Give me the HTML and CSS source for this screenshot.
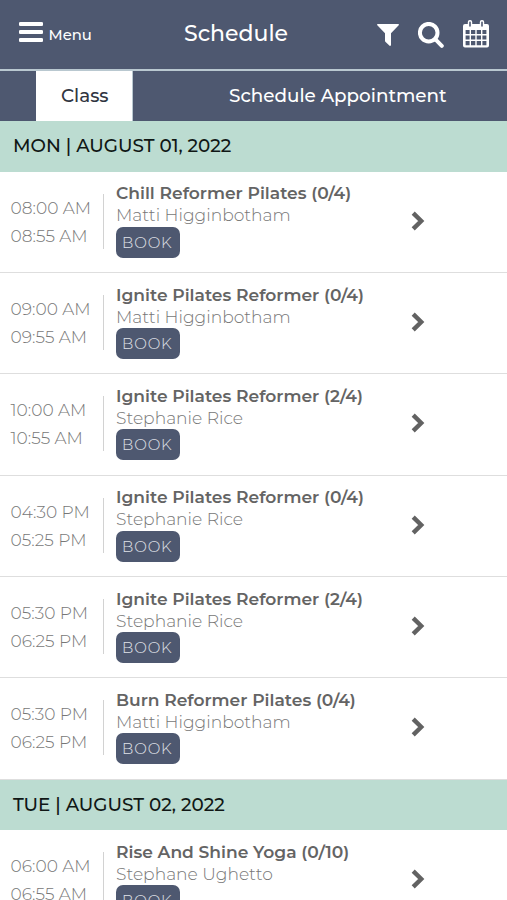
FILE: index.html
```html
<!DOCTYPE html>
<html lang="en">
<head>
<meta charset="utf-8">
<meta name="viewport" content="width=device-width">
<title>Schedule</title>
<link rel="stylesheet" href="styles.css">
</head>
<body>
<header class="topbar">
  <div class="menu"><svg class="bars" viewBox="0 0 24 20"><path d="M1.4 2h21.2M1.4 10h21.2M1.4 18h21.2"/></svg><span class="menu-label">Menu</span></div>
  <h1 class="heading">Schedule</h1>
  <div class="actions">
    <svg class="funnel" viewBox="0 0 22 22"><path d="M.8 0h20.4c.8 0 1 .8.5 1.3L14 9.2v11.9c0 .8-.8 1.1-1.4.6l-4-3.7a1.8 1.8 0 0 1-.6-1.3V9.2L.3 1.3C-.2.8 0 0 .8 0Z"/></svg>
    <svg class="search" viewBox="0 0 26 26"><circle cx="10.7" cy="10.7" r="8.8"/><path d="m17.2 17.2 6.6 6.6"/></svg>
    <svg class="calendar" viewBox="0 0 26 28"><path class="calendar-body" fill-rule="evenodd" d="M2 4h22a2 2 0 0 1 2 2v19.5a2 2 0 0 1-2 2H2a2 2 0 0 1-2-2V6a2 2 0 0 1 2-2ZM2.6 10v4h4v-4ZM8 10v4h4.3v-4ZM13.7 10v4H18v-4ZM19.4 10v4h4v-4ZM2.6 15.4v4.2h4v-4.2ZM8 15.4v4.2h4.3v-4.2ZM13.7 15.4v4.2H18v-4.2ZM19.4 15.4v4.2h4v-4.2ZM2.6 21v4.3h4V21ZM8 21v4.3h4.3V21ZM13.7 21v4.3H18V21ZM19.4 21v4.3h4V21Z"/><rect class="ring" x="4.8" y="0" width="4.4" height="7.4" rx="2"/><rect class="ring" x="16.8" y="0" width="4.4" height="7.4" rx="2"/><path class="ring-hole" d="M7 2.2v3.7M19 2.2v3.7"/></svg>
  </div>
</header>
<nav class="tabs"><span class="tab active">Class</span><span class="tab wide">Schedule Appointment</span></nav>
<main>
  <h2 class="day">MON | AUGUST 01, 2022</h2>
  <article class="row"><div class="times"><span>08:00 AM</span><span>08:55 AM</span></div><div class="info"><h3>Chill Reformer Pilates (0/4)</h3><p>Matti Higginbotham</p><span class="book">BOOK</span></div><svg class="arrow" viewBox="0 0 14 20"><path d="m2.2 2.2 8 7.8-8 7.8"/></svg></article>
  <article class="row"><div class="times"><span>09:00 AM</span><span>09:55 AM</span></div><div class="info"><h3>Ignite Pilates Reformer (0/4)</h3><p>Matti Higginbotham</p><span class="book">BOOK</span></div><svg class="arrow" viewBox="0 0 14 20"><path d="m2.2 2.2 8 7.8-8 7.8"/></svg></article>
  <article class="row"><div class="times"><span>10:00 AM</span><span>10:55 AM</span></div><div class="info"><h3>Ignite Pilates Reformer (2/4)</h3><p>Stephanie Rice</p><span class="book">BOOK</span></div><svg class="arrow" viewBox="0 0 14 20"><path d="m2.2 2.2 8 7.8-8 7.8"/></svg></article>
  <article class="row"><div class="times"><span>04:30 PM</span><span>05:25 PM</span></div><div class="info"><h3>Ignite Pilates Reformer (0/4)</h3><p>Stephanie Rice</p><span class="book">BOOK</span></div><svg class="arrow" viewBox="0 0 14 20"><path d="m2.2 2.2 8 7.8-8 7.8"/></svg></article>
  <article class="row"><div class="times"><span>05:30 PM</span><span>06:25 PM</span></div><div class="info"><h3>Ignite Pilates Reformer (2/4)</h3><p>Stephanie Rice</p><span class="book">BOOK</span></div><svg class="arrow" viewBox="0 0 14 20"><path d="m2.2 2.2 8 7.8-8 7.8"/></svg></article>
  <article class="row"><div class="times"><span>05:30 PM</span><span>06:25 PM</span></div><div class="info"><h3>Burn Reformer Pilates (0/4)</h3><p>Matti Higginbotham</p><span class="book">BOOK</span></div><svg class="arrow" viewBox="0 0 14 20"><path d="m2.2 2.2 8 7.8-8 7.8"/></svg></article>
  <h2 class="day">TUE | AUGUST 02, 2022</h2>
  <article class="row"><div class="times"><span>06:00 AM</span><span>06:55 AM</span></div><div class="info"><h3>Rise And Shine Yoga (0/10)</h3><p>Stephane Ughetto</p><span class="book">BOOK</span></div><svg class="arrow" viewBox="0 0 14 20"><path d="m2.2 2.2 8 7.8-8 7.8"/></svg></article>
</main>
</body>
</html>
```

FILE: styles.css
```css
* { box-sizing: border-box; }
html, body { height: 100%; overflow: hidden; }
body { margin: 0; background: #fff; font-family: Montserrat, Inter, sans-serif; white-space: nowrap; }
h1, h2, h3, p { margin: 0; }
.topbar { height: 71px; display: grid; grid-template-columns: 184px 1fr 130px; background: #4e5870; border-bottom: 2px solid #b9c8d0; color: #fff; }
.menu { display: flex; padding: 22px 0 0 19px; }
.bars { width: 24px; height: 20px; }
.bars path { fill: none; stroke: #fff; stroke-width: 3.8; stroke-linecap: round; }
.menu-label { margin-left: 5.5px; font-size: 14.8px; line-height: 26px; font-weight: 500; }
.heading { font-size: 22px; line-height: 68px; font-weight: 500; }
.actions { display: flex; align-items: flex-start; padding-top: 20px; }
.funnel { width: 22px; height: 22px; margin-top: 4px; fill: #fff; }
.search { width: 26px; height: 26px; margin: 2px 0 0 19px; fill: none; stroke: #fff; stroke-width: 4; stroke-linecap: round; }
.calendar { width: 26px; height: 28px; margin-left: 19px; }
.calendar-body { fill: #fff; }
.ring { fill: #fff; }
.ring-hole { stroke: #4e5870; stroke-width: 1.6; stroke-linecap: round; }
.tabs { height: 50px; display: flex; padding-left: 36px; background: #4e5870; color: #fff; font-size: 18.35px; line-height: 50px; font-weight: 500; }
.tab.active { width: 97px; padding-left: 25px; background: #fff; color: #303541; border-right: 1px solid #b9c8d0; }
.tab.wide { margin-left: 96px; }
.day { height: 50.5px; padding-left: 13px; background: #bcdcd1; color: #101715; font-size: 18.35px; line-height: 50.6px; font-weight: 500; }
.row { height: 101.37px; display: grid; grid-template-columns: 104px 307px 14px; border-bottom: 1px solid #dedede; }
.times { height: 55px; margin-top: 22px; padding-left: 10.6px; border-right: 1px solid #d2d2d2; display: flex; flex-direction: column; color: #777; font-size: 17.05px; line-height: 28.1px; font-weight: 300; }
.info { padding: 9.7px 0 0 12px; }
.info h3 { color: #646464; font-size: 17.1px; line-height: 23px; font-weight: 600; }
.info p { color: #777; font-size: 17.1px; line-height: 21px; font-weight: 300; }
.book { display: block; width: 63.5px; height: 31px; margin-top: 1.5px; padding-left: 6px; border-radius: 7px; background: #4e5870; color: #e0e3e9; font-size: 15px; line-height: 31px; font-weight: 300; letter-spacing: .9px; }
.arrow { width: 14px; height: 20px; margin-top: 39.2px; }
.arrow path { fill: none; stroke: #626262; stroke-width: 4.4; }
```
